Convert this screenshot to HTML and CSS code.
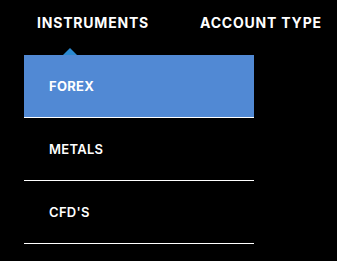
FILE: index.html
```html
<!DOCTYPE html>
<html lang="en">
<head>
    <meta charset="UTF-8">
    <meta name="viewport" content="width=device-width, initial-scale=1.0">
    <title>Menu</title>
    <link rel="stylesheet" href="styles.css">
</head>
<body>

    <nav class="nav">
        <div class="nav-item">
            <a class="nav-link" href="#">INSTRUMENTS</a>
            <ul class="dropdown">
                <li class="active"><a href="#">FOREX</a></li>
                <li><a href="#">METALS</a></li>
                <li><a href="#">CFD'S</a></li>
            </ul>
        </div>
        <div class="nav-item">
            <a class="nav-link" href="#">ACCOUNT TYPE</a>
        </div>
    </nav>

</body>
</html>
```

FILE: styles.css
```css
body {
    margin: 0;
    background-color: #000;
    font-family: Inter, "Open Sans", sans-serif;
    color: #fff;
}
a {
    color: #fff;
    text-decoration: none;
}
.nav {
    display: flex;
    padding-top: 14px;
}
.nav-item:first-child {
    margin-left: 24px;
    width: 176px;
}
.nav-item:first-child .nav-link {
    padding-left: 13px;
}
.nav-link {
    display: block;
    font-size: 14px;
    font-weight: 700;
    line-height: 17px;
    letter-spacing: 0.8px;
}
.dropdown {
    position: relative;
    list-style: none;
    margin: 24px 0 0;
    padding: 0;
    width: 230px;
}
.dropdown::before {
    content: "";
    position: absolute;
    top: -7px;
    left: 39px;
    border-left: 7px solid transparent;
    border-right: 7px solid transparent;
    border-bottom: 7px solid #2b8ad2;
}
.dropdown li {
    border-bottom: 1px solid #fff;
}
.dropdown li a {
    display: block;
    height: 62px;
    line-height: 62px;
    padding-left: 25px;
    font-size: 13px;
    font-weight: 600;
    letter-spacing: 0.3px;
}
.dropdown li.active a {
    background-color: #5189d4;
    font-weight: 700;
}
```
